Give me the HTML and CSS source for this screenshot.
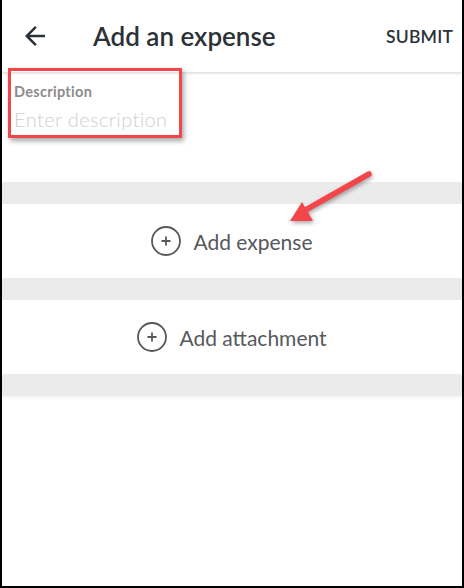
FILE: index.html
```html
<!DOCTYPE html>
<html lang="en">
<head>
    <meta charset="UTF-8">
    <meta name="viewport" content="width=device-width, initial-scale=1.0">
    <title>Add an expense</title>
    <link rel="stylesheet" href="styles.css">
</head>
<body>
    <div class="frame">
        <div class="topbar">
            <button class="back" aria-label="Back">
                <svg width="30" height="30" viewBox="0 0 24 24"><path d="M20 11H7.83l5.59-5.59L12 4l-8 8 8 8 1.41-1.41L7.83 13H20v-2z" fill="#2b3137"/></svg>
            </button>
            <h1>Add an expense</h1>
            <span class="submit">SUBMIT</span>
        </div>

        <div class="descripcion">
            <label for="desc">Description</label>
            <input type="text" id="desc" placeholder="Enter description">
            <div class="marca"></div>
        </div>

        <div class="franja"></div>
        <div class="fila">
            <span class="mas"><svg width="30" height="30" viewBox="0 0 30 30"><circle cx="15" cy="15" r="14" fill="none" stroke="#55595d" stroke-width="1.8"/><path d="M15 10.5v9M10.5 15h9" stroke="#55595d" stroke-width="1.8"/></svg></span>
            <span>Add expense</span>
        </div>
        <div class="franja"></div>
        <div class="fila">
            <span class="mas"><svg width="30" height="30" viewBox="0 0 30 30"><circle cx="15" cy="15" r="14" fill="none" stroke="#55595d" stroke-width="1.8"/><path d="M15 10.5v9M10.5 15h9" stroke="#55595d" stroke-width="1.8"/></svg></span>
            <span>Add attachment</span>
        </div>
        <div class="franja ultima"></div>

        <!-- flecha de anotacion -->
        <svg class="flecha" width="464" height="588" viewBox="0 0 464 588">
            <line x1="369" y1="174" x2="302" y2="212" stroke="#f2464a" stroke-width="5.5" stroke-linecap="round"/>
            <polygon points="290,221 302,202 313,221" fill="#f2464a"/>
        </svg>
    </div>
</body>
</html>
```

FILE: styles.css
```css
:root {
    --texto: #2b3137;
    --gris: #55595d;
    --franja: #ebebeb;
    --rojo: #f2464a;
}

* {
    margin: 0;
    padding: 0;
    box-sizing: border-box;
    font-family: 'Lato', sans-serif;
}

body {
    background: #000;
}

.frame {
    position: relative;
    width: 464px;
    height: 588px;
    background: #fff;
    border: 2px solid #000;
    border-top: none;
    overflow: hidden;
}

.topbar {
    display: flex;
    align-items: center;
    height: 72px;
    padding: 0 9px 0 18px;
    background: #fff;
    box-shadow: 0 1px 3px rgba(0,0,0,0.18);
    position: relative;
    z-index: 1;
}

.back {
    display: flex;
    background: none;
    border: none;
    width: 30px;
    height: 30px;
}

h1 {
    font-size: 26px;
    font-weight: 600;
    color: var(--texto);
    margin-left: 43px;
    flex: 1;
}

.submit {
    font-size: 17.5px;
    font-weight: 600;
    color: var(--texto);
    letter-spacing: 0.2px;
}

.descripcion {
    position: relative;
    padding: 12px 12px 51px;
}

label {
    display: block;
    font-size: 14.5px;
    line-height: 16px;
    font-weight: 700;
    letter-spacing: 0.3px;
    color: #8c8c8c;
    margin-bottom: 7px;
}

input {
    display: block;
    border: none;
    outline: none;
    width: 100%;
    font-size: 20px;
    line-height: 24px;
    font-weight: 300;
    letter-spacing: 0.4px;
    color: var(--texto);
}

input::placeholder {
    color: #cfcfcf;
}

/* recuadro rojo de la captura */
.marca {
    position: absolute;
    left: 6px;
    top: -4px;
    width: 174px;
    height: 70px;
    border: 3px solid var(--rojo);
    box-shadow: 2px 3px 5px rgba(0,0,0,0.35);
    z-index: 2;
}

.franja {
    height: 22px;
    background: var(--franja);
}

.franja.ultima {
    box-shadow: 0 2px 4px rgba(0,0,0,0.06);
}

.fila {
    display: flex;
    align-items: center;
    justify-content: center;
    gap: 12px;
    height: 74px;
    font-size: 21px;
    color: var(--gris);
}

.mas {
    display: flex;
}

.flecha {
    position: absolute;
    left: -2px;
    top: 0;
    filter: drop-shadow(1px 2px 2px rgba(0,0,0,0.35));
    pointer-events: none;
}
```
